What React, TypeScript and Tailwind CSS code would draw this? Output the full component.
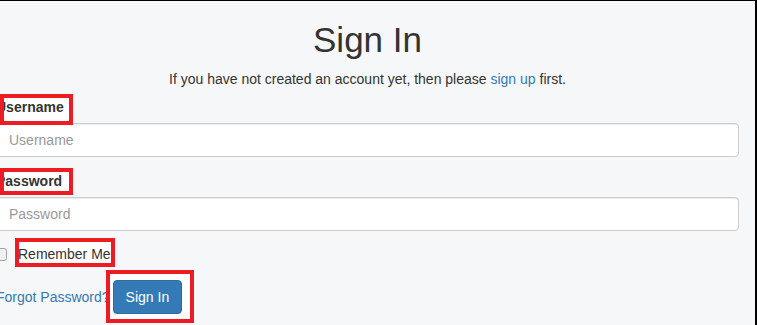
const Mark = ({ box }: { box: string }) => (
  <>
    <span className={`absolute bg-white ${box}`} />
  </>
);

const Frame = ({ box }: { box: string }) => (
  <span className={`absolute border-4 border-[#ed1c24] ${box}`} />
);

const App = () => {
  return (
    <div
      className="w-[757px] h-[325px] overflow-hidden bg-[#f6f7f9] border-t border-r-2 border-black text-[#333] text-[14px]"
      style={{ fontFamily: '"Liberation Sans", Arial, sans-serif' }}
    >
      <div className="w-[743px] -ml-[4px]">
        <div className="text-center">
          <h1 className="mt-[20px] mb-[10px] text-[35px] leading-[38px] font-normal">Sign In</h1>
          <p className="mb-[8px] leading-5">
            If you have not created an account yet, then please{" "}
            <a className="text-[#337ab7]">sign up</a> first.
          </p>
        </div>

        <div className="mb-[14px]">
          <label className="relative inline-block mb-[6px] font-bold leading-5">
            <Mark box="left-[4px] -top-[3px] w-[73px] h-[31px]" />
            <span className="relative">Username</span>
            <Frame box="left-[4px] -top-[3px] w-[73px] h-[31px]" />
          </label>
          <input
            placeholder="Username"
            className="block w-full h-[34px] px-[12px] bg-white border border-[#ccc] rounded-[4px] shadow-[inset_0_1px_1px_rgba(0,0,0,0.075)] placeholder:text-[#999] outline-none"
          />
        </div>

        <div className="mb-[13px]">
          <label className="relative inline-block mb-[6px] font-bold leading-5">
            <Mark box="left-[4px] -top-[3px] w-[73px] h-[27px]" />
            <span className="relative">Password</span>
            <Frame box="left-[4px] -top-[3px] w-[73px] h-[27px]" />
          </label>
          <input
            type="password"
            placeholder="Password"
            className="block w-full h-[34px] px-[12px] bg-white border border-[#ccc] rounded-[4px] shadow-[inset_0_1px_1px_rgba(0,0,0,0.075)] placeholder:text-[#999] outline-none"
          />
        </div>

        <div className="flex items-center h-5 leading-5">
          <span className="-ml-[2px] w-[13px] h-[13px] rounded-[3px] border border-[#a3a3a3] bg-[#f1f1f1]" />
          <label className="relative ml-[11px]">
            <Mark box="-left-[3px] -top-[6px] w-[100px] h-[29px]" />
            <span className="relative">Remember Me</span>
            <Frame box="-left-[3px] -top-[6px] w-[100px] h-[29px]" />
          </label>
        </div>

        <div className="flex items-center mt-[16px] gap-[3px]">
          <a className="text-[#337ab7] leading-5">Forgot Password?</a>
          <div className="relative">
            <Mark box="-left-[7px] -top-[10px] w-[88px] h-[53px]" />
            <Frame box="-left-[7px] -top-[10px] w-[88px] h-[53px]" />
            <button className="relative h-[34px] px-[12px] leading-5 text-white bg-[#337ab7] border border-[#2e6da4] rounded-[4px]">
              Sign In
            </button>
          </div>
        </div>
      </div>
    </div>
  );
};

export default App;
